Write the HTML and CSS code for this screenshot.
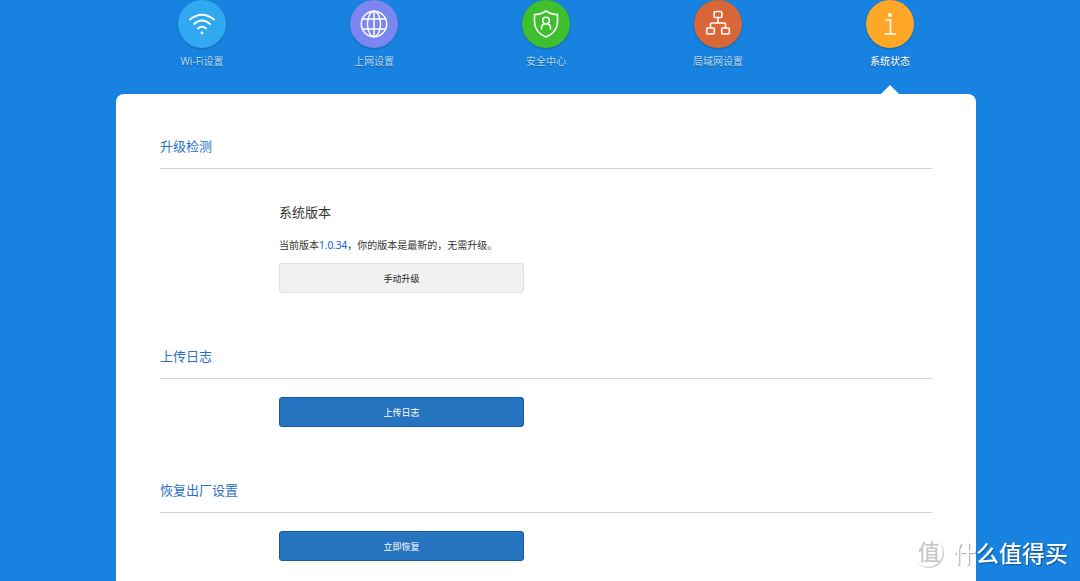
FILE: index.html
```html
<!DOCTYPE html>
<html lang="zh-CN">
<head>
<meta charset="utf-8">
<meta name="viewport" content="width=device-width, initial-scale=1">
<title>系统状态</title>
<link rel="stylesheet" href="styles.css">
</head>
<body>
<div class="page">
  <nav class="nav">
    <a class="nav-item" href="#wifi">
      <span class="nav-icon wifi">
        <svg viewBox="0 0 48 48" fill="none" stroke="#fff" stroke-width="1.8" stroke-linecap="round"><path d="M12 19.5Q24 10 36 19.500M16 24Q24 17 32 24M20 28.500Q24 25 28 28.500"/><circle cx="24" cy="33" r="1.400" fill="#fff" stroke="none"/></svg>
      </span>
      <span>Wi-Fi设置</span>
    </a>
    <a class="nav-item" href="#internet">
      <span class="nav-icon internet">
        <svg viewBox="0 0 48 48" fill="none" stroke="#fff" stroke-width="1.5"><circle cx="24" cy="24" r="12.700"/><ellipse cx="24" cy="24" rx="6.500" ry="12.700"/><path d="M24 11.300V36.700M12.500 19H35.500M12.500 29H35.500"/></svg>
      </span>
      <span>上网设置</span>
    </a>
    <a class="nav-item" href="#security">
      <span class="nav-icon security">
        <svg viewBox="0 0 48 48" fill="none" stroke="#fff" stroke-width="1.6" stroke-linejoin="round" stroke-linecap="round"><path d="M24 11Q29 14.500 35.500 14.500V22Q35 32.500 24 37Q13 32.500 12.500 22V14.500Q19 14.500 24 11Z"/><circle cx="24" cy="20.500" r="3.300"/><path d="M19.500 29V27.500Q19.500 23.800 24 23.800T28.500 27.500V29"/></svg>
      </span>
      <span>安全中心</span>
    </a>
    <a class="nav-item" href="#lan">
      <span class="nav-icon lan">
        <svg viewBox="0 0 48 48" fill="none" stroke="#fff" stroke-width="1.6"><rect x="20.200" y="11.500" width="7.600" height="6" rx="1"/><rect x="12.700" y="28" width="7.600" height="6" rx="1"/><rect x="27.700" y="28" width="7.600" height="6" rx="1"/><path d="M24 17.500V23M16.500 28V24Q16.500 23 17.500 23H30.500Q31.500 23 31.500 24V28"/></svg>
      </span>
      <span>局域网设置</span>
    </a>
    <a class="nav-item active" href="#status" aria-current="page">
      <span class="nav-icon status">
        <svg viewBox="0 0 48 48" fill="none" stroke="#fff" stroke-width="1.6"><circle cx="24" cy="15" r="1.900" fill="#fff" stroke="none"/><path d="M19 20H24.500V34M18.500 34H30"/></svg>
      </span>
      <span>系统状态</span>
    </a>
  </nav>
  <main class="panel">
    <section class="section">
      <h2 class="section-title">升级检测</h2>
      <div class="section-body version">
        <h3 class="version-title">系统版本</h3>
        <p class="version-text">当前版本<span class="version-number">1.0.34</span>，你的版本是最新的，无需升级。</p>
        <button class="button" type="button">手动升级</button>
      </div>
    </section>
    <section class="section">
      <h2 class="section-title">上传日志</h2>
      <div class="section-body">
        <button class="button primary" type="button">上传日志</button>
      </div>
    </section>
    <section class="section">
      <h2 class="section-title">恢复出厂设置</h2>
      <div class="section-body">
        <button class="button primary" type="button">立即恢复</button>
      </div>
    </section>
  </main>
</div>
<div class="watermark">
  <span class="watermark-logo">值</span>
  <span>什么值得买</span>
</div>
</body>
</html>
```
FILE: styles.css
```css
* {
  box-sizing: border-box;
}

body {
  margin: 0;
  padding: 0 28px 0 40px;
  background: #1782df;
  color: #333;
  font-family: "Noto Sans", "Noto Sans CJK SC", sans-serif;
  font-size: 10px;
  line-height: 20px;
}

.page {
  display: flex;
  flex-direction: column;
  min-height: 100vh;
  max-width: 860px;
  margin: 0 auto;
}

.nav {
  display: grid;
  grid-template-columns: repeat(5, 1fr);
}

.nav-item {
  position: relative;
  display: flex;
  flex-direction: column;
  align-items: center;
  gap: 3px;
  padding-bottom: 23px;
  color: #b9d9f5;
  text-decoration: none;
  text-shadow: 0 1px 1px rgba(0, 0, 0, 0.3);
}

.nav-item.active {
  color: #fff;
}

.nav-item.active::after {
  content: "";
  position: absolute;
  bottom: 0;
  left: 50%;
  margin-left: -9px;
  border: 9px solid transparent;
  border-top: 0;
  border-bottom-color: #fff;
}

.nav-icon {
  width: 48px;
  height: 48px;
  border-radius: 50%;
  box-shadow: 0 1px 2px rgba(0, 0, 0, 0.25);
}

.nav-icon svg {
  display: block;
}

.wifi {
  background: #31a9f1;
}

.internet {
  background: #7b86f0;
}

.security {
  background: #3fbf2e;
}

.lan {
  background: #d96636;
}

.status {
  background: #ffa726;
}

.panel {
  flex: 1;
  display: flex;
  flex-direction: column;
  gap: 53px;
  padding: 42px 44px 20px;
  border-radius: 8px 8px 0 0;
  background: #fff;
}

.section-title {
  margin: 0;
  padding-bottom: 12px;
  border-bottom: 1px solid #d4d4d4;
  color: #2a72c4;
  font-size: 13px;
  font-weight: 400;
}

.section-body {
  padding: 18px 0 0 119px;
}

.version {
  padding-top: 33px;
}

.version-title {
  margin: 0 0 13px;
  font-size: 13px;
  font-weight: 400;
}

.version-text {
  margin: 0 0 8px;
}

.version-number {
  color: #0a62cf;
}

.button {
  display: block;
  width: 245px;
  max-width: 100%;
  height: 30px;
  padding: 0;
  border: 1px solid #e0e0e0;
  border-radius: 3px;
  background: #f1f1f1;
  color: #222;
  font-family: inherit;
  font-size: 9px;
}

.button.primary {
  border-color: #1258a8;
  background: #2673c0;
  color: #fff;
}

.watermark {
  position: fixed;
  right: 12px;
  bottom: 12px;
  display: flex;
  align-items: center;
  gap: 9px;
  color: #fff;
  font-size: 23px;
  font-weight: 500;
  line-height: 32px;
  text-shadow: 1px 1px 1px rgba(0, 0, 0, 0.35);
}

.watermark-logo {
  width: 30px;
  height: 30px;
  border-radius: 50%;
  box-shadow: inset -1px -1px 1px #c4c4c4;
  color: #c8c8c8;
  font-size: 22px;
  line-height: 26px;
  text-align: center;
  text-shadow: none;
}
```
